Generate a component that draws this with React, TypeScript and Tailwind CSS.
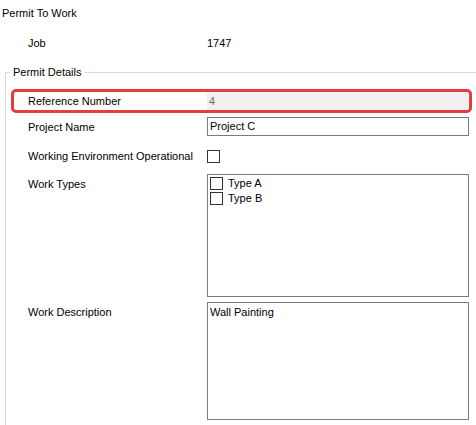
import { ReactNode } from "react";

const font = { fontFamily: '"Liberation Sans", Arial, sans-serif' };

function Row({ label, children, top = false }: { label: string; children: ReactNode; top?: boolean }) {
  return (
    <div className={`flex ${top ? "items-start" : "items-center"}`}>
      <div className={`w-[201px] shrink-0 pl-[22px] whitespace-nowrap leading-[14px] ${top ? "pt-[3px]" : ""}`}>
        {label}
      </div>
      {children}
    </div>
  );
}

function Box() {
  return <div className="w-[13px] h-[13px] shrink-0 border border-[#333] bg-white" />;
}

export default function App() {
  return (
    <div
      className="w-[476px] h-[425px] overflow-hidden bg-white text-[11px] text-black pt-[6px]"
      style={font}
    >
      <div className="pl-[2px] leading-[14px]">Permit To Work</div>

      <div className="flex mt-[16px] leading-[14px]">
        <div className="w-[207px] pl-[28px]">Job</div>
        <div>1747</div>
      </div>

      <fieldset className="mt-[15px] ml-[5px] w-[490px] border-t border-l border-[#dcdcdc] pb-[20px]">
        <legend className="ml-[4px] px-[3px] leading-[14px]">Permit Details</legend>

        {/* highlighted read-only reference row */}
        <div className="mt-[10px] ml-[5px] w-[461px] h-[24px] border-[3px] border-[#e63c3c] rounded-[5px] flex items-center">
          <div className="w-[193px] shrink-0 pl-[14px] leading-[14px]">Reference Number</div>
          <div className="flex-1 mr-[1px] h-[18px] bg-[#f0f0f0] text-[#6d6d6d] pl-[2px] leading-[18px]">4</div>
        </div>

        <div className="flex flex-col">
          <div className="mt-[4px]">
            <Row label="Project Name">
              <div className="w-[262px] h-[19px] border border-[#7a7a7a] pl-[2px] leading-[17px]">Project C</div>
            </Row>
          </div>

          <div className="mt-[13px]">
            <Row label="Working Environment Operational">
              <Box />
            </Row>
          </div>

          <div className="mt-[11px]">
            <Row label="Work Types" top>
              <div className="w-[262px] h-[123px] border border-[#7a7a7a] pl-[2px] pt-[2px] flex flex-col gap-[2px]">
                {["Type A", "Type B"].map((t) => (
                  <div key={t} className="flex items-center gap-[5px] leading-[13px]">
                    <Box />
                    <span>{t}</span>
                  </div>
                ))}
              </div>
            </Row>
          </div>

          <div className="mt-[5px]">
            <Row label="Work Description" top>
              <div className="w-[262px] h-[118px] border border-[#7a7a7a] pl-[2px] pt-[2px] leading-[14px]">
                Wall Painting
              </div>
            </Row>
          </div>
        </div>
      </fieldset>
    </div>
  );
}
